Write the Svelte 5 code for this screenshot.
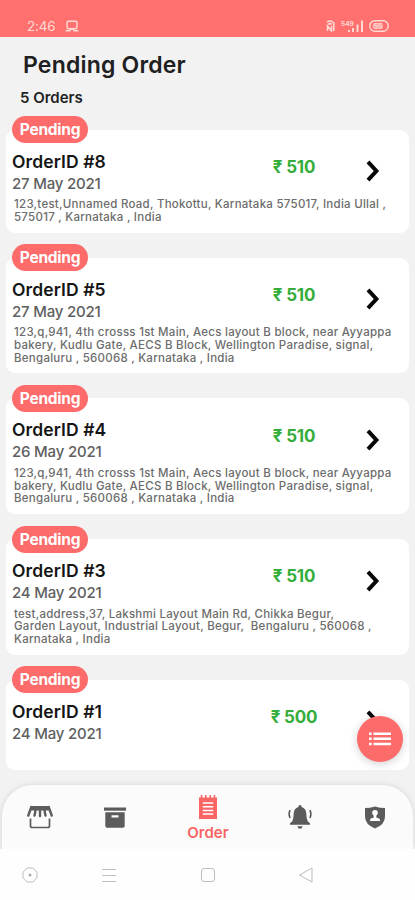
<script lang="ts">
    type Order = { id: number; date: string; price: number; address: string[] };

    const orders: Order[] = [
        {
            id: 8,
            date: "27 May 2021",
            price: 510,
            address: [
                "123,test,Unnamed Road, Thokottu, Karnataka 575017, India Ullal ,",
                "575017 , Karnataka , India",
            ],
        },
        {
            id: 5,
            date: "27 May 2021",
            price: 510,
            address: [
                "123,q,941, 4th crosss 1st Main, Aecs layout B block, near Ayyappa",
                "bakery, Kudlu Gate, AECS B Block, Wellington Paradise, signal,",
                "Bengaluru , 560068 , Karnataka , India",
            ],
        },
        {
            id: 4,
            date: "26 May 2021",
            price: 510,
            address: [
                "123,q,941, 4th crosss 1st Main, Aecs layout B block, near Ayyappa",
                "bakery, Kudlu Gate, AECS B Block, Wellington Paradise, signal,",
                "Bengaluru , 560068 , Karnataka , India",
            ],
        },
        {
            id: 3,
            date: "24 May 2021",
            price: 510,
            address: [
                "test,address,37, Lakshmi Layout Main Rd, Chikka Begur,",
                "Garden Layout, Industrial Layout, Begur,  Bengaluru , 560068 ,",
                "Karnataka , India",
            ],
        },
        { id: 1, date: "24 May 2021", price: 500, address: [] },
    ];
</script>

<div class="screen">
    <header class="status">
        <div class="status-left">
            <span class="time">2:46</span>
            <svg width="14" height="12" viewBox="0 0 14 12" fill="none" stroke="currentColor">
                <rect x="2" y="1.2" width="10" height="7.6" rx="1.5" stroke-width="1.4" />
                <path d="M.5 10.8h4.3l1-1.4h2.4l1 1.4h4.3" stroke-width="1.4" />
            </svg>
        </div>
        <div class="status-right">
            <svg width="10" height="12" viewBox="0 0 10 12" fill="none" stroke="currentColor">
                <path d="M1 2q3-2 6 0M2 4.3q2-1.3 4 0M1.5 11V6l4 5V6M7.8 2v9" stroke-width="1.6" />
            </svg>
            <svg class="signal" width="23" height="12" viewBox="0 0 23 12" fill="currentColor">
                <text x="0" y="5.5" font-size="6.5" font-weight="700">549</text>
                <path d="M7 10h2v2H7zM11 8h2v4h-2zM15.5 4.5h2V12h-2zM20 .5h2V12h-2z" />
            </svg>
            <svg width="20" height="12" viewBox="0 0 20 12" fill="none" stroke="currentColor">
                <rect x=".8" y=".8" width="18.4" height="10.4" rx="5" stroke-width="1.4" />
                <rect x="3.5" y="3" width="10.5" height="6" rx="2.5" fill="currentColor" fill-opacity=".5" stroke="none" />
                <text x="4.5" y="8.6" font-size="7" font-weight="600" fill="currentColor" stroke="none">55</text>
            </svg>
        </div>
    </header>

    <main>
        <h1>Pending Order</h1>
        <p class="count">5 Orders</p>

        <div class="list">
            {#each orders as order (order.id)}
                <article class="card" class:empty={order.address.length === 0}>
                    <span class="badge">Pending</span>
                    <div class="row">
                        <div class="info">
                            <h2>OrderID #{order.id}</h2>
                            <p class="date">{order.date}</p>
                        </div>
                        <span class="price">₹ {order.price}</span>
                        <svg class="chevron" width="16" height="24" viewBox="0 0 16 24">
                            <path d="M3 2.8 11.4 12 3 21.2" fill="none" stroke="#080808" stroke-width="4" />
                        </svg>
                    </div>
                    <div class="address">
                        {#each order.address as line}
                            <p>{line}</p>
                        {/each}
                    </div>
                </article>
            {/each}
        </div>
    </main>

    <button class="fab" aria-label="Filter">
        <svg width="22" height="14" viewBox="0 0 22 14" fill="#fff">
            <path d="M0 .5h2.7V3H0zM0 5.6h2.7v2.5H0zM0 10.7h2.7v2.5H0zM4.5.5H22V3H4.5zM4.5 5.6H22v2.5H4.5zM4.5 10.7H22v2.5H4.5z" />
        </svg>
    </button>

    <nav class="tabs">
        <div class="tab">
            <svg width="26" height="24" viewBox="0 0 26 24" fill="none" stroke="#5c5c5c">
                <path d="M4 1h18v4.5H4z" fill="#5c5c5c" stroke="none" />
                <path d="M4.3 2 1.3 10.5M9 3 7.5 10.5M13 3v8M17 3l1.5 7.5M21.7 2 24.7 10.5" stroke-width="2.4" stroke-linecap="round" />
                <path d="M3.5 13.5v7.2q0 1.8 1.8 1.8h15.4q1.8 0 1.8-1.8v-7.2" stroke-width="1.7" />
            </svg>
        </div>
        <div class="tab">
            <svg width="22" height="21" viewBox="0 0 22 21" fill="#5c5c5c">
                <path d="M0 .5h22v3.2H0z" />
                <path fill-rule="evenodd" d="M1.3 5.2h19.4V19q0 1.7-1.7 1.7H3Q1.3 20.7 1.3 19zM7.5 8.2v2.3h7V8.2z" />
            </svg>
        </div>
        <div class="tab active">
            <svg width="20" height="25" viewBox="0 0 20 25">
                <path d="M1 2.5h18V24H1z" fill="#fc6565" />
                <path d="M3.5 0v4M7.8 0v4M12.2 0v4M16.5 0v4" stroke="#fc6565" stroke-width="1.5" />
                <path d="M4.8 8h10.4M4.8 11.7h10.4M4.8 15.4h10.4M4.8 19.1h10.4" stroke="#fff" stroke-width="1.5" />
            </svg>
            <span>Order</span>
        </div>
        <div class="tab">
            <svg width="26" height="25" viewBox="0 0 26 25" fill="#5c5c5c">
                <path d="M13 0q1.6 0 1.7 1.9Q19 3.3 19.3 8.5q.2 6.3 1.9 8.3L23 18.2v1.5H3v-1.5l1.8-1.4q1.7-2 1.9-8.3Q7 3.3 11.3 1.9 11.4 0 13 0z" />
                <path d="M10.3 21.2h5.4q-.6 2.6-2.7 2.6t-2.7-2.6z" />
                <path d="M3 5q-1.8 4 0 8M23 5q1.8 4 0 8" fill="none" stroke="#5c5c5c" stroke-width="1.6" />
            </svg>
        </div>
        <div class="tab">
            <svg width="20" height="23" viewBox="0 0 20 23">
                <path d="M0 2Q5 2 10 .5 15 2 20 2v8.5Q20 18.5 10 22.5 0 18.5 0 10.5z" fill="#5c5c5c" />
                <circle cx="10" cy="6.7" r="2.8" fill="#fff" />
                <path d="M8.7 9h2.6v2.5l3.2 1.3q.5.3.5 2.2H5q0-1.9.5-2.2l3.2-1.3z" fill="#fff" />
            </svg>
        </div>
    </nav>

    <footer class="system">
        <svg width="16" height="16" viewBox="0 0 16 16" fill="none" stroke="#bcbcbc">
            <path d="M5.2 1h5.6L15 5.2v5.6L10.8 15H5.2L1 10.8V5.2z" stroke-linejoin="round" />
            <circle cx="8" cy="8" r="1.5" fill="#aaa" stroke="none" />
        </svg>
        <svg width="16" height="16" viewBox="0 0 16 16" stroke="#c0c0c0">
            <path d="M1 2.5h14M1 8.5h14M1 14.5h14" />
        </svg>
        <svg width="16" height="16" viewBox="0 0 16 16" fill="none" stroke="#bcbcbc">
            <rect x="1.5" y="1.5" width="13" height="13" rx="2.5" />
        </svg>
        <svg width="16" height="16" viewBox="0 0 16 16" fill="none" stroke="#bcbcbc">
            <path d="M14 1v14L1.5 8z" stroke-linejoin="round" />
        </svg>
    </footer>
</div>

<style>
    :global(body) {
        margin: 0;
    }
    .screen {
        position: relative;
        box-sizing: border-box;
        width: 415px;
        height: 900px;
        display: flex;
        flex-direction: column;
        overflow: hidden;
        background: #f2f2f2;
        font-family: Inter, "Open Sans", sans-serif;
    }
    h1, h2, p {
        margin: 0;
    }
    svg {
        display: block;
        flex: none;
    }
    .status {
        flex: none;
        box-sizing: border-box;
        height: 37px;
        padding: 15px 26px 0 27px;
        display: flex;
        align-items: center;
        justify-content: space-between;
        background: #ff706f;
        color: #ffd9d4;
    }
    .status-left, .status-right {
        display: flex;
        align-items: center;
    }
    .status-left {
        gap: 10px;
    }
    .status-right {
        gap: 5px;
    }
    .time {
        font-size: 13.5px;
        line-height: 16px;
        letter-spacing: -0.2px;
    }
    main {
        flex: 1;
        min-height: 0;
        padding: 13px 6px 0;
        overflow: hidden;
    }
    h1 {
        padding-left: 17px;
        font-size: 23px;
        line-height: 30px;
        font-weight: 600;
        letter-spacing: 0.2px;
        color: #202020;
        white-space: nowrap;
    }
    .count {
        padding: 8px 0 0 14px;
        font-size: 15px;
        line-height: 20px;
        font-weight: 600;
        color: #222;
    }
    .list {
        display: flex;
        flex-direction: column;
        gap: 25px;
        padding-top: 21.5px;
    }
    .card {
        position: relative;
        box-sizing: border-box;
        padding: 20px 6px 9px;
        border-radius: 9px;
        background: #fff;
    }
    .card.empty {
        height: 90px;
    }
    .badge {
        position: absolute;
        top: -13.5px;
        left: 6px;
        width: 76px;
        height: 27px;
        border-radius: 14px;
        background: #fd6b6b;
        color: #fff;
        font-size: 15.5px;
        line-height: 27px;
        font-weight: 700;
        letter-spacing: -0.25px;
        text-align: center;
    }
    .row {
        display: grid;
        grid-template-columns: 218px 128px 1fr;
        height: 46px;
    }
    h2 {
        font-size: 17.5px;
        line-height: 23px;
        font-weight: 600;
        letter-spacing: 0.1px;
        color: #151515;
    }
    .date {
        font-size: 15px;
        line-height: 21px;
        font-weight: 500;
        letter-spacing: -0.2px;
        color: #606060;
    }
    .price {
        padding-top: 6.3px;
        text-align: center;
        font-size: 17px;
        line-height: 22px;
        font-weight: 700;
        letter-spacing: -0.2px;
        color: #35ad3b;
    }
    .chevron {
        margin: 9.5px 0 0 7px;
    }
    .address {
        padding: 2.5px 0 0 2px;
        font-size: 11.5px;
        line-height: 12.75px;
        font-weight: 500;
        letter-spacing: 0.26px;
        color: #6c6c6c;
        white-space: pre;
    }
    .fab {
        position: absolute;
        top: 716px;
        left: 357px;
        width: 46px;
        height: 46px;
        padding: 0;
        border: 0;
        border-radius: 50%;
        display: flex;
        align-items: center;
        justify-content: center;
        background: #fd6b6b;
        box-shadow: 0 2px 8px rgba(0, 0, 0, 0.18);
    }
    .tabs {
        flex: none;
        box-sizing: border-box;
        height: 64px;
        margin: 0 2px;
        padding: 0 0 0 1px;
        display: grid;
        grid-template-columns: 74px 75px 112px 72px 78px;
        border-radius: 31px 31px 0 0;
        background: #fbfbfb;
        box-shadow: 0 0 6px rgba(0, 0, 0, 0.12);
    }
    .tab {
        display: flex;
        flex-direction: column;
        align-items: center;
        justify-content: center;
    }
    .tab.active {
        justify-content: flex-start;
        padding-top: 10px;
        color: #f76464;
        font-size: 15px;
        line-height: 26px;
        font-weight: 600;
    }
    .system {
        position: relative;
        flex: none;
        box-sizing: border-box;
        height: 51px;
        padding-left: 22px;
        display: grid;
        grid-template-columns: 79px 99px 98px 1fr;
        align-items: center;
        background: #fefefe;
    }
</style>
